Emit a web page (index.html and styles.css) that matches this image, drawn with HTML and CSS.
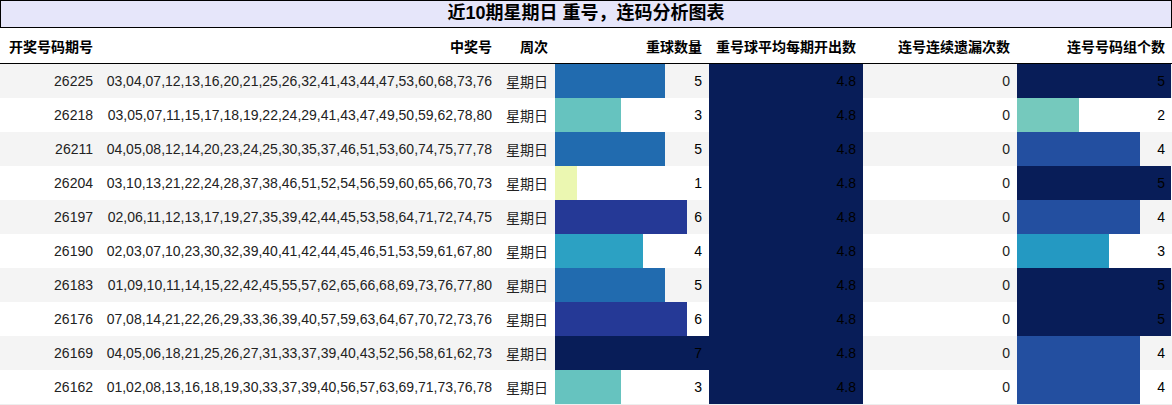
FILE: index.html
```html
<!DOCTYPE html>
<html lang="zh">
<head>
<meta charset="utf-8">
<title>近10期星期日 重号，连码分析图表</title>
<link rel="stylesheet" href="styles.css">
</head>
<body>
<div class="report">
  <div class="title">近10期星期日 重号，连码分析图表</div>
  <table class="grid">
    <colgroup>
      <col class="c1"><col class="c2"><col class="c3"><col class="c4"><col class="c5"><col class="c6"><col class="c7">
    </colgroup>
    <thead>
      <tr>
        <th>开奖号码期号</th>
        <th>中奖号</th>
        <th>周次</th>
        <th>重球数量</th>
        <th>重号球平均每期开出数</th>
        <th>连号连续遗漏次数</th>
        <th>连号号码组个数</th>
      </tr>
    </thead>
    <tbody>
      <tr>
        <td>26225</td><td>03,04,07,12,13,16,20,21,25,26,32,41,43,44,47,53,60,68,73,76</td><td>星期日</td>
        <td class="bar" style="--w:110px;--c:#216baf">5</td>
        <td class="bar" style="--w:154px;--c:#081d58">4.8</td>
        <td>0</td>
        <td class="bar" style="--w:154px;--c:#081d58">5</td>
      </tr>
      <tr>
        <td>26218</td><td>03,05,07,11,15,17,18,19,22,24,29,41,43,47,49,50,59,62,78,80</td><td>星期日</td>
        <td class="bar" style="--w:66px;--c:#66c3bf">3</td>
        <td class="bar" style="--w:154px;--c:#081d58">4.8</td>
        <td>0</td>
        <td class="bar" style="--w:62px;--c:#75c9bd">2</td>
      </tr>
      <tr>
        <td>26211</td><td>04,05,08,12,14,20,23,24,25,30,35,37,46,51,53,60,74,75,77,78</td><td>星期日</td>
        <td class="bar" style="--w:110px;--c:#216baf">5</td>
        <td class="bar" style="--w:154px;--c:#081d58">4.8</td>
        <td>0</td>
        <td class="bar" style="--w:123px;--c:#234fa0">4</td>
      </tr>
      <tr>
        <td>26204</td><td>03,10,13,21,22,24,28,37,38,46,51,52,54,56,59,60,65,66,70,73</td><td>星期日</td>
        <td class="bar" style="--w:22px;--c:#ebf7b1">1</td>
        <td class="bar" style="--w:154px;--c:#081d58">4.8</td>
        <td>0</td>
        <td class="bar" style="--w:154px;--c:#081d58">5</td>
      </tr>
      <tr>
        <td>26197</td><td>02,06,11,12,13,17,19,27,35,39,42,44,45,53,58,64,71,72,74,75</td><td>星期日</td>
        <td class="bar" style="--w:132px;--c:#253996">6</td>
        <td class="bar" style="--w:154px;--c:#081d58">4.8</td>
        <td>0</td>
        <td class="bar" style="--w:123px;--c:#234fa0">4</td>
      </tr>
      <tr>
        <td>26190</td><td>02,03,07,10,23,30,32,39,40,41,42,44,45,46,51,53,59,61,67,80</td><td>星期日</td>
        <td class="bar" style="--w:88px;--c:#2ca1c3">4</td>
        <td class="bar" style="--w:154px;--c:#081d58">4.8</td>
        <td>0</td>
        <td class="bar" style="--w:92px;--c:#2499c2">3</td>
      </tr>
      <tr>
        <td>26183</td><td>01,09,10,11,14,15,22,42,45,55,57,62,65,66,68,69,73,76,77,80</td><td>星期日</td>
        <td class="bar" style="--w:110px;--c:#216baf">5</td>
        <td class="bar" style="--w:154px;--c:#081d58">4.8</td>
        <td>0</td>
        <td class="bar" style="--w:154px;--c:#081d58">5</td>
      </tr>
      <tr>
        <td>26176</td><td>07,08,14,21,22,26,29,33,36,39,40,57,59,63,64,67,70,72,73,76</td><td>星期日</td>
        <td class="bar" style="--w:132px;--c:#253996">6</td>
        <td class="bar" style="--w:154px;--c:#081d58">4.8</td>
        <td>0</td>
        <td class="bar" style="--w:154px;--c:#081d58">5</td>
      </tr>
      <tr>
        <td>26169</td><td>04,05,06,18,21,25,26,27,31,33,37,39,40,43,52,56,58,61,62,73</td><td>星期日</td>
        <td class="bar" style="--w:154px;--c:#081d58">7</td>
        <td class="bar" style="--w:154px;--c:#081d58">4.8</td>
        <td>0</td>
        <td class="bar" style="--w:123px;--c:#234fa0">4</td>
      </tr>
      <tr>
        <td>26162</td><td>01,02,08,13,16,18,19,30,33,37,39,40,56,57,63,69,71,73,76,78</td><td>星期日</td>
        <td class="bar" style="--w:66px;--c:#66c3bf">3</td>
        <td class="bar" style="--w:154px;--c:#081d58">4.8</td>
        <td>0</td>
        <td class="bar" style="--w:123px;--c:#234fa0">4</td>
      </tr>
    </tbody>
  </table>
</div>
</body>
</html>
```
FILE: styles.css
```css
html, body {
  margin: 0;
  padding: 0;
  background: #ffffff;
}

body {
  font-family: "Liberation Sans", "Noto Sans CJK SC", Arial, sans-serif;
  color: #111111;
  font-size: 14px;
}

.report {
  width: 1172px;
}

.title {
  box-sizing: border-box;
  height: 28px;
  border: 1px solid #000000;
  background: #e6e6fa;
  text-align: center;
  font-size: 18px;
  font-weight: bold;
  line-height: 25px;
  color: #000000;
}

.grid {
  width: 1172px;
  border-collapse: collapse;
  table-layout: fixed;
  border-bottom: 1px solid #eeeeee;
}

.c1 { width: 100px; }
.c2 { width: 399px; }
.c3 { width: 56px; }
.c4 { width: 154px; }
.c5 { width: 154px; }
.c6 { width: 154px; }
.c7 { width: 155px; }

.grid th {
  height: 35px;
  padding: 0 7px 0 0;
  text-align: right;
  font-weight: bold;
  font-size: 14px;
  color: #000000;
  border-bottom: 1px solid #000000;
  white-space: nowrap;
}

.grid td {
  height: 34px;
  padding: 0 7px 0 0;
  text-align: right;
  white-space: nowrap;
  overflow: hidden;
  color: #222222;
}

.grid tbody tr:nth-child(odd) td {
  background-color: #f4f4f4;
}

.grid tbody tr td.bar,
.grid tbody tr:nth-child(odd) td.bar {
  background-image: linear-gradient(to right, var(--c) var(--w), transparent var(--w));
  color: #000000;
}
```
